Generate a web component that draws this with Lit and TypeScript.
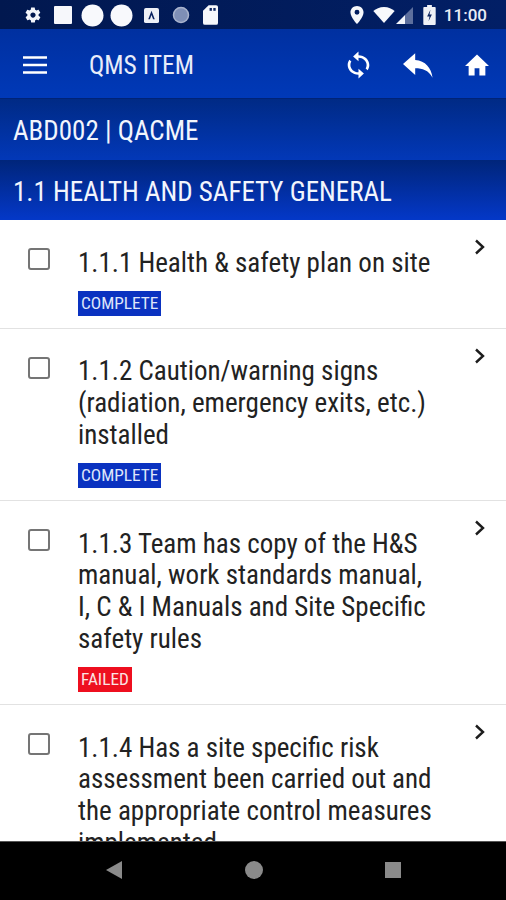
import { LitElement, html, css } from "lit";
import { customElement } from "lit/decorators.js";

const items = [
  { t: ["1.1.1 Health & safety plan on site"], s: "COMPLETE" },
  { t: ["1.1.2 Caution/warning signs", "(radiation, emergency exits, etc.)", "installed"], s: "COMPLETE" },
  { t: ["1.1.3 Team has copy of the H&S", "manual, work standards manual,", "I, C & I Manuals and Site Specific", "safety rules"], s: "FAILED" },
  { t: ["1.1.4 Has a site specific risk", "assessment been carried out and", "the appropriate control measures", "implemented"], s: "" },
];

@customElement("app-root")
export class AppRoot extends LitElement {
  static styles = css`
    :host { display: block; width: 506px; height: 900px; overflow: hidden; background: #fff; font-family: Roboto, "Liberation Sans", sans-serif; }
    .page { display: flex; flex-direction: column; height: 900px; }
    .status { flex: 0 0 29px; display: flex; align-items: center; justify-content: space-between; padding: 1px 19px 0 24px; background: linear-gradient(90deg, #01184f, #021f66); color: #f4f6fb; box-sizing: border-box; }
    .status svg { display: block; }
    .sl, .sr { display: flex; align-items: center; }
    .time { font-size: 17px; font-weight: 500; margin-left: 8px; color: #e8ecf5; }
    .bar { flex: 0 0 70px; display: flex; align-items: center; padding: 3px 17px 0 23px; background: linear-gradient(#0030a0, #0039b8); box-sizing: border-box; color: #fff; border-bottom: 1px solid #002377; }
    .bar .title { font-size: 25.5px; margin-left: 42px; flex: 1; color: #e8edfa; font-stretch: 75%; font-family: "Roboto Condensed", Roboto, sans-serif; }
    .bar .ic { display: flex; align-items: center; }
    .h { box-sizing: border-box; display: flex; align-items: center; padding: 3px 13px 0; color: #f2f5fd; font-size: 27px; font-stretch: 75%; font-family: "Roboto Condensed", Roboto, sans-serif; }
    .h1 { flex: 0 0 61px; padding-top: 2px; background: linear-gradient(#002a85, #0238b8); }
    .h2 { flex: 0 0 60px; background: linear-gradient(#00257a, #0438c8); }
    .list { flex: 1; min-height: 0; overflow: hidden; }
    .row { display: flex; border-bottom: 1px solid #e2e2e2; padding: 0 0 12.3px 28px; }
    .cb { flex: 0 0 22px; height: 22px; box-sizing: border-box; border: 2px solid #757575; border-radius: 3px; margin-top: 28px; }
    .body { flex: 1; margin-left: 28px; padding-top: 27.5px; }
    .line { font-size: 27px; line-height: 31.67px; color: #222; white-space: nowrap; font-stretch: 75%; font-family: "Roboto Condensed", Roboto, sans-serif; }
    .badge { display: inline-block; margin-top: 11.5px; height: 25px; line-height: 25px; padding: 0 3px; font-size: 17.3px; color: #dfe6fa; font-stretch: 75%; font-family: "Roboto Condensed", Roboto, sans-serif; vertical-align: top; }
    .COMPLETE { background: #0a32c0; }
    .FAILED { background: #ee0f1f; color: #fbe4e4; }
    .chev { flex: 0 0 33px; padding-top: 18px; box-sizing: border-box; }
    .nav { flex: 0 0 59px; background: #000; border-top: 1px solid #555; box-sizing: border-box; display: flex; justify-content: space-between; align-items: center; padding: 0 105px 2px 106px; }
  `;

  chev() {
    return html`<svg width="14" height="18" viewBox="0 0 14 18"><path d="M3 2.500 10 9 3 15.500" fill="none" stroke="#1c1c1c" stroke-width="2.400"/></svg>`;
  }

  render() {
    return html`<div class="page">
      <div class="status">
        <div class="sl">
          <svg width="18" height="18" viewBox="0 0 24 24" style="margin-right:12px"><path fill="#f4f6fb" d="M19.400 13c0-.3.1-.6.1-1s0-.7-.1-1l2.100-1.600c.2-.2.2-.4.1-.6l-2-3.500c-.1-.2-.4-.3-.6-.2l-2.500 1c-.5-.4-1.100-.7-1.700-1L14.400 2.500c0-.3-.2-.5-.5-.5h-4c-.2 0-.4.2-.5.400L9 5.100c-.6.3-1.100.6-1.700 1l-2.500-1c-.2-.1-.5 0-.6.2l-2 3.500c-.1.2-.1.5.1.6L4.500 11c0 .3-.1.7-.1 1s0 .7.100 1l-2.100 1.600c-.2.2-.2.4-.1.6l2 3.500c.1.2.4.3.6.2l2.500-1c.5.4 1.100.7 1.700 1l.4 2.600c0 .3.2.5.5.5h4c.2 0 .4-.2.5-.4l.4-2.700c.6-.3 1.100-.6 1.700-1l2.500 1c.2.1.5 0 .6-.2l2-3.500c.1-.2.1-.5-.1-.6zM12 15.500c-1.900 0-3.500-1.600-3.500-3.500s1.600-3.500 3.500-3.500 3.500 1.600 3.500 3.500-1.600 3.500-3.500 3.500z"/></svg>
          <svg width="18" height="18" style="margin-right:9px"><rect width="18" height="18" rx="1" fill="#f6f7fb"/></svg>
          <svg width="23" height="23" style="margin-right:6px"><circle cx="11.500" cy="11.500" r="11" fill="#f8f9fc"/></svg>
          <svg width="23" height="23" style="margin-right:11px"><circle cx="11.500" cy="11.500" r="11" fill="#f8f9fc"/></svg>
          <svg width="15" height="15" viewBox="0 0 16 16" style="margin-right:13px"><rect width="16" height="16" rx="2" fill="#eef0f6"/><path d="M8 3 11.500 12H9.700L8 7.500 6.300 12H4.500z" fill="#0b2360"/></svg>
          <svg width="18" height="18" style="margin-right:13px"><circle cx="9" cy="9" r="7.500" fill="#7f8fb6" stroke="#aab4cd" stroke-width="1.500"/></svg>
          <svg width="15" height="20" viewBox="0 0 16 21"><path fill="#f6f7fb" d="M6 0h8a2 2 0 0 1 2 2v17a2 2 0 0 1-2 2H2a2 2 0 0 1-2-2V6z"/><rect x="7" y="3" width="2.500" height="3" fill="#0b2360"/><rect x="11" y="3" width="2.500" height="3" fill="#0b2360"/></svg>
        </div>
        <div class="sr">
          <svg width="14" height="18" viewBox="0 0 16 22" style="margin-right:9px"><path fill-rule="evenodd" fill="#f6f7fb" d="M8 0C3.600 0 0 3.500 0 7.800 0 13.500 8 22 8 22s8-8.500 8-14.200C16 3.500 12.400 0 8 0zm0 10.700a3 3 0 1 1 0-6 3 3 0 0 1 0 6z"/></svg>
          <svg width="22" height="16" viewBox="0 0 24 18" style="margin-right:1px"><path fill="#f8f9fc" d="M12 18 0 4.500C3 2 7 0 12 0s9 2 12 4.500z"/></svg>
          <svg width="17" height="17" viewBox="0 0 17 17" style="margin-right:10px"><path fill="#5d6f9d" d="M17 0v17H9V8z"/><path fill="#f4f6fb" d="M9 8v9H0z"/></svg>
          <svg width="13" height="20" viewBox="0 0 13 21"><path fill="#eef0f6" d="M4 0h5v2h3a1 1 0 0 1 1 1v17a1 1 0 0 1-1 1H1a1 1 0 0 1-1-1V3a1 1 0 0 1 1-1h3z"/><path fill="#0b2360" d="M7.500 5 4 12h2.500l-1 5L9 10H6.500z"/></svg>
          <span class="time">11:00</span>
        </div>
      </div>
      <div class="bar">
        <svg width="24" height="18" viewBox="0 0 24 18"><path d="M0 1.500h24M0 9h24M0 16.500h24" stroke="#fff" stroke-width="2.600"/></svg>
        <span class="title">QMS ITEM</span>
        <div class="ic">
          <svg width="23" height="28" viewBox="3.500 .5 17 23" preserveAspectRatio="none" style="margin-right:33px"><path fill="#fff" d="M12 4V1L8 5l4 4V6c3.300 0 6 2.700 6 6 0 1-.25 2-.7 2.800l1.460 1.460C19.540 15 20 13.560 20 12c0-4.420-3.580-8-8-8zm0 14c-3.300 0-6-2.700-6-6 0-1 .25-2 .7-2.800L5.240 7.740C4.460 9 4 10.440 4 12c0 4.420 3.580 8 8 8v3l4-4-4-4v3z"/></svg>
          <svg width="30" height="25" viewBox="0 0 32 26" style="margin-right:32px"><path fill="#fff" d="M13 0 0 11.500 13 23v-7c8 0 14 2 18.500 10C30 15 24 8 13 7z"/></svg>
          <svg width="24" height="22" viewBox="0 0 25 22"><path fill="#fff" d="M10 22v-7.500h5V22h6.200V12H25L12.500 0 0 12h3.800v10z"/></svg>
        </div>
      </div>
      <div class="h h1">ABD002 | QACME</div>
      <div class="h h2">1.1 HEALTH AND SAFETY GENERAL</div>
      <div class="list">
        ${items.map(i => html`<div class="row">
          <div class="cb"></div>
          <div class="body">
            ${i.t.map(l => html`<div class="line">${l}</div>`)}
            ${i.s ? html`<span class="badge ${i.s}">${i.s}</span>` : ""}
          </div>
          <div class="chev">${this.chev()}</div>
        </div>`)}
      </div>
      <div class="nav">
        <svg width="16" height="18" viewBox="0 0 16 18"><path fill="#8a8a8a" d="M16 0v18L0 9z"/></svg>
        <svg width="18" height="18"><circle cx="9" cy="9" r="9" fill="#8a8a8a"/></svg>
        <svg width="16" height="16"><rect width="16" height="16" fill="#8a8a8a"/></svg>
      </div>
    </div>`;
  }
}
